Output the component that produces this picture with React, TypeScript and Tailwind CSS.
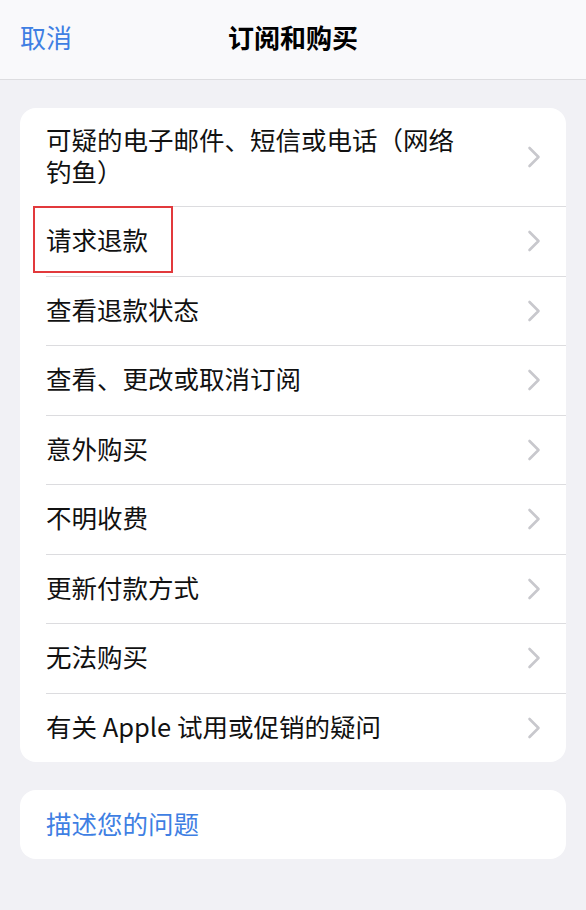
const ITEMS = [
  '可疑的电子邮件、短信或电话（网络钓鱼）',
  '请求退款',
  '查看退款状态',
  '查看、更改或取消订阅',
  '意外购买',
  '不明收费',
  '更新付款方式',
  '无法购买',
  '有关 Apple 试用或促销的疑问',
];

const FONT = '[font-family:"Noto_Sans_CJK_SC","Noto_Sans",sans-serif]';

function Chevron() {
  return (
    <svg width="14" height="22" viewBox="0 0 14 22" fill="none" className="shrink-0">
      <polyline points="2.5,2 11.5,11 2.5,20" stroke="#c8c8cd" strokeWidth="2.6" strokeLinecap="round" strokeLinejoin="round" />
    </svg>
  );
}

export default function App() {
  return (
    <div className={`w-[586px] h-[910px] bg-[#f1f1f5] ${FONT} overflow-hidden`}>
      {/* 顶部导航 */}
      <div className="h-[80px] bg-[#f9f9fb] border-b border-[#dddde0] grid grid-cols-[1fr_auto_1fr] items-center px-[20px] pb-[6px]">
        <span className="text-[26px] leading-[36px] text-[#3f7fe3]">取消</span>
        <span className="text-[26px] leading-[36px] font-bold text-black">订阅和购买</span>
        <span />
      </div>

      {/* 列表 */}
      <div className="mx-[20px] mt-[28px] bg-white rounded-[16px] overflow-hidden">
        {ITEMS.map((label, i) => (
          <div key={label} className="relative">
            {i > 0 && <div className="ml-[26px] h-px bg-[#dcdcdf]" />}
            <div
              className={`flex items-center pl-[26px] pr-[25px] ${
                i === 0 ? 'h-[98px]' : 'h-[68.5px]'
              }`}
            >
              <span className="w-[424px] pb-[4px] text-[25.5px] leading-[32px] text-[#111]">{label}</span>
              <div className="flex-1" />
              <Chevron />
            </div>
            {/* 红框标注 */}
            {i === 1 && (
              <div className="absolute left-[13px] top-0 w-[140px] h-[67px] border-[2.5px] border-[#e2393c]" />
            )}
          </div>
        ))}
      </div>

      <div className="mx-[20px] mt-[28px] h-[69px] bg-white rounded-[16px] flex items-center pl-[26px]">
        <span className="pb-[4px] text-[25.5px] leading-[32px] text-[#3f7fe3]">描述您的问题</span>
      </div>
    </div>
  );
}
